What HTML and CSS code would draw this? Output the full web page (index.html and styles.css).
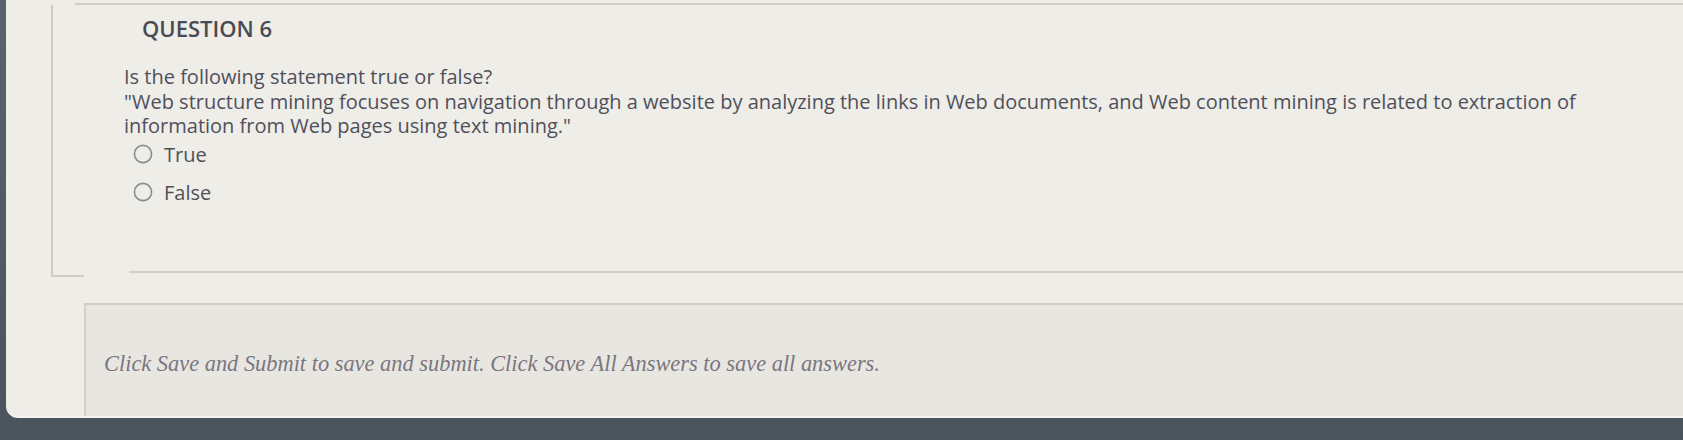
FILE: index.html
```html
<!DOCTYPE html>
<html lang="en">
<head>
<meta charset="utf-8">
<title>Question 6</title>
<link rel="stylesheet" href="styles.css">
</head>
<body>
<div class="screen">
  <div class="topline"></div>
  <div class="panel">
    <h2 class="heading">QUESTION 6</h2>
    <div class="body">
      <div>Is the following statement true or false?</div>
      <div>"Web structure mining focuses on navigation through a website by analyzing the links in Web documents, and Web content mining is related to extraction of information from Web pages using text mining."</div>
    </div>
    <div class="options">
      <label class="option"><svg class="radio" width="20" height="20" viewBox="0 0 20 20"><circle cx="10" cy="10" r="8.6" fill="none" stroke="#8d8c92" stroke-width="1.6"/></svg><span>True</span></label>
      <label class="option"><svg class="radio" width="20" height="20" viewBox="0 0 20 20"><circle cx="10" cy="10" r="8.6" fill="none" stroke="#8d8c92" stroke-width="1.6"/></svg><span>False</span></label>
    </div>
  </div>
  <div class="panel-end">
    <div class="elbow"></div>
    <div class="rule"></div>
  </div>
  <div class="submit-box">
    <p class="note">Click Save and Submit to save and submit. Click Save All Answers to save all answers.</p>
  </div>
</div>
</body>
</html>
```

FILE: styles.css
```css
html, body {
  margin: 0;
  padding: 0;
}
body {
  width: 1683px;
  height: 440px;
  overflow: hidden;
  background: linear-gradient(180deg, #5a636b 0%, #4a545d 100%);
}
.screen {
  margin-left: 6px;
  height: 416px;
  background: #eeede8;
  border-bottom: 2px solid #f5f4f0;
  border-bottom-left-radius: 12px;
  display: flex;
  flex-direction: column;
}
.topline {
  margin-top: 3px;
  margin-left: 69px;
  height: 2px;
  background: #cfcdc7;
}
.panel {
  margin-left: 45px;
  border-left: 2px solid #cfccc5;
  height: 266px;
  box-sizing: border-box;
  padding-top: 9px;
  padding-left: 71px;
  font-family: "Open Sans", "Liberation Sans", sans-serif;
  color: #50505a;
}
.heading {
  margin: 0 0 0 18px;
  font-size: 22px;
  line-height: 28px;
  font-weight: 600;
  color: #4a4a52;
}
.body {
  margin-top: 23px;
  font-size: 20px;
  line-height: 24.5px;
  padding-right: 40px;
}
.options {
  margin-top: 3px;
  margin-left: 9px;
  display: flex;
  flex-direction: column;
  gap: 13px;
  font-size: 20px;
  line-height: 25px;
}
.option {
  display: block;
}
.radio {
  vertical-align: middle;
  margin-right: 11px;
  position: relative;
  top: -2px;
}
.panel-end {
  display: flex;
  height: 6px;
}
.elbow {
  margin-left: 45px;
  width: 31px;
  border-left: 2px solid #cfccc5;
  border-bottom: 2px solid #cfccc5;
}
.rule {
  flex: 1;
  margin-left: 45px;
  border-top: 2px solid #d2d0ca;
}
.submit-box {
  margin-left: 78px;
  margin-top: 26px;
  flex: 1;
  background: #e8e6e0;
  border-top: 2px solid #cfcdc7;
  border-left: 2px solid #d3d1cb;
  padding-top: 46px;
  padding-left: 18px;
}
.note {
  margin: 0;
  font-family: "Liberation Serif", "DejaVu Serif", serif;
  font-style: italic;
  font-size: 22.4px;
  line-height: 26px;
  color: #7a7681;
}
```
